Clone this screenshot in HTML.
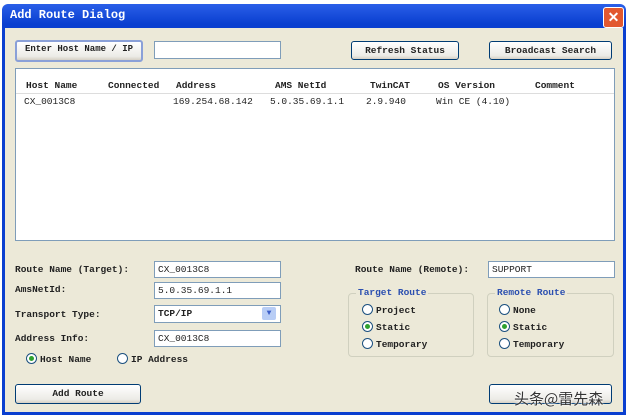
<!DOCTYPE html><html><head><style>
body{margin:0;width:630px;height:420px;background:#fff;position:relative;overflow:hidden;font-family:"Liberation Mono",monospace;font-size:9.5px;color:#222}
.a{position:absolute}
.win{left:2px;top:4px;width:624px;height:411px;background:linear-gradient(#2a5fe8,#0a3fd0 20px,#0a3fd0);border-radius:6px 6px 0 0}
.body{left:5px;top:28px;width:618px;height:384px;background:#ece9d8}
.title{left:10px;top:8px;color:#fff;font-weight:bold;font-size:12px;font-family:"Liberation Mono",monospace}
.x{left:603px;top:7px;width:19px;height:19px;background:#e2582f;border:1px solid #fff;border-radius:3px;color:#fff;font:bold 14px/19px "Liberation Sans",sans-serif;text-align:center}
.btn{background:linear-gradient(#fff,#ecebe6 80%,#d6d0c5);border:1px solid #003c74;border-radius:3px;text-align:center;line-height:17px;font-weight:bold}
.in{background:#fff;border:1px solid #7f9db9;line-height:15px;padding-left:3px}
.lbl{font-weight:bold}
.grp{border:1px solid #d0d0bf;border-radius:4px}
.gt{color:#2b4fb0;background:#ece9d8;padding:0 2px;font-weight:bold}
.r{display:inline-block;width:9px;height:9px;border:1px solid #1c5180;border-radius:50%;background:#fff;vertical-align:-2px;margin-right:3px;position:relative}
.r.on:after{content:"";position:absolute;left:2px;top:2px;width:5px;height:5px;border-radius:50%;background:#2fa12f}
</style></head><body>
<div class="a win"></div>
<div class="a body"></div>
<div class="a title">Add Route Dialog</div>
<div class="a x">✕</div>
<div class="a btn" style="left:15px;top:40px;width:124px;height:18px;border:2px solid #8aa0d8;line-height:15px;font-size:9px">Enter Host Name / IP</div>
<div class="a in" style="left:154px;top:41px;width:122px;height:16px"></div>
<div class="a btn" style="left:351px;top:41px;width:106px;height:17px">Refresh Status</div>
<div class="a btn" style="left:489px;top:41px;width:121px;height:17px">Broadcast Search</div>
<div class="a" style="left:15px;top:68px;width:598px;height:171px;background:#fff;border:1px solid #7f9db9"></div>
<div class="a" style="left:16px;top:77px;width:598px;height:16px;border-bottom:1px solid #ddd"></div>
<div class="a lbl" style="left:26px;top:80px">Host Name</div>
<div class="a lbl" style="left:108px;top:80px">Connected</div>
<div class="a lbl" style="left:176px;top:80px">Address</div>
<div class="a lbl" style="left:275px;top:80px">AMS NetId</div>
<div class="a lbl" style="left:370px;top:80px">TwinCAT</div>
<div class="a lbl" style="left:438px;top:80px">OS Version</div>
<div class="a lbl" style="left:535px;top:80px">Comment</div>
<div class="a" style="left:24px;top:96px">CX_0013C8</div>
<div class="a" style="left:173px;top:96px">169.254.68.142</div>
<div class="a" style="left:270px;top:96px">5.0.35.69.1.1</div>
<div class="a" style="left:366px;top:96px">2.9.940</div>
<div class="a" style="left:436px;top:96px">Win CE (4.10)</div>
<div class="a lbl" style="left:15px;top:264px">Route Name (Target):</div>
<div class="a lbl" style="left:15px;top:284px">AmsNetId:</div>
<div class="a lbl" style="left:15px;top:309px">Transport Type:</div>
<div class="a lbl" style="left:15px;top:333px">Address Info:</div>
<div class="a in" style="left:154px;top:261px;width:122px;height:15px">CX_0013C8</div>
<div class="a in" style="left:154px;top:282px;width:122px;height:15px">5.0.35.69.1.1</div>
<div class="a in" style="left:154px;top:305px;width:122px;height:16px;font-weight:bold">TCP/IP</div>
<div class="a" style="left:262px;top:307px;width:14px;height:13px;background:#b8cdf5;border-radius:2px;color:#3c5ec8;font-size:8px;text-align:center;line-height:13px">▼</div>
<div class="a in" style="left:154px;top:330px;width:122px;height:15px">CX_0013C8</div>
<div class="a lbl" style="left:26px;top:353px"><span class="r on"></span>Host Name</div>
<div class="a lbl" style="left:117px;top:353px"><span class="r"></span>IP Address</div>
<div class="a lbl" style="left:355px;top:264px">Route Name (Remote):</div>
<div class="a in" style="left:488px;top:261px;width:122px;height:15px">SUPPORT</div>
<div class="a grp" style="left:348px;top:293px;width:124px;height:62px"></div>
<div class="a gt" style="left:356px;top:287px">Target Route</div>
<div class="a lbl" style="left:362px;top:304px"><span class="r"></span>Project</div>
<div class="a lbl" style="left:362px;top:321px"><span class="r on"></span>Static</div>
<div class="a lbl" style="left:362px;top:338px"><span class="r"></span>Temporary</div>
<div class="a grp" style="left:487px;top:293px;width:125px;height:62px"></div>
<div class="a gt" style="left:495px;top:287px">Remote Route</div>
<div class="a lbl" style="left:499px;top:304px"><span class="r"></span>None</div>
<div class="a lbl" style="left:499px;top:321px"><span class="r on"></span>Static</div>
<div class="a lbl" style="left:499px;top:338px"><span class="r"></span>Temporary</div>
<div class="a btn" style="left:15px;top:384px;width:124px;height:18px">Add Route</div>
<div class="a btn" style="left:489px;top:384px;width:121px;height:18px"></div>
<div class="a" style="left:514px;top:388px;font:15px 'Noto Sans CJK SC',sans-serif;color:#333;text-shadow:0 0 2px #fff,0 0 2px #fff">头条@雷先森</div>
</body></html>
